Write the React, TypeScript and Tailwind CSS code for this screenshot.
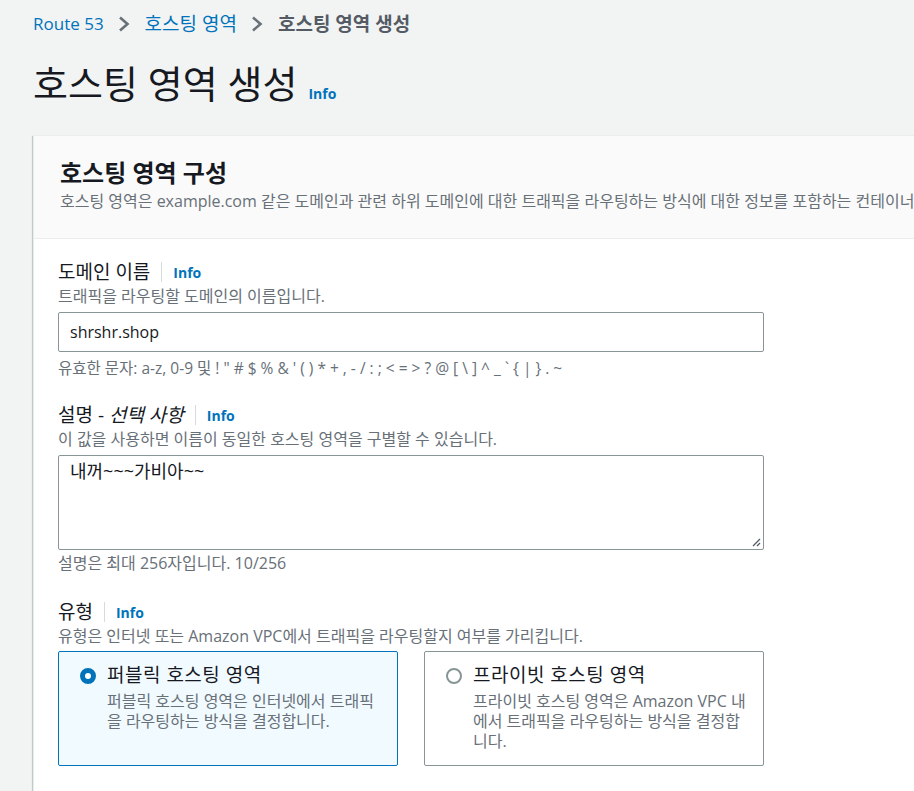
const font = "font-['Open_Sans','Noto_Sans_CJK_KR',sans-serif]";

function Chevron() {
  return (
    <svg className="ml-[14px] mr-[15px]" width="12" height="16" viewBox="0 0 12 16" fill="none">
      <path d="M2 1.5 L9.5 8 L2 14.5" stroke="#687078" strokeWidth="2.6" />
    </svg>
  );
}

function Info() {
  return <span className="text-[14px] font-bold text-[#0073bb]">Info</span>;
}

function Label({ children }: { children: React.ReactNode }) {
  return (
    <div className="flex items-center">
      <span className="text-[19px] leading-[24px] text-[#16191f]">{children}</span>
      <span className="mx-[11px] h-[20px] w-px bg-[#d5dbdb]" />
      <Info />
    </div>
  );
}

function Hint({ children, className = '' }: { children: React.ReactNode; className?: string }) {
  return <p className={`text-[16px] leading-[20px] text-[#687078] ${className}`}>{children}</p>;
}

function RadioCard({ checked, title, lines }: { checked: boolean; title: string; lines: string[] }) {
  return (
    <div
      className={`flex gap-[11px] rounded-[2px] border pl-[21px] pr-[18px] pt-[11px] pb-[14px] ${
        checked ? 'border-[#0073bb] bg-[#f1faff]' : 'border-[#879596] bg-white'
      }`}
    >
      <div className="pt-[5px]">
        {checked ? (
          <span className="block h-[16px] w-[16px] rounded-full border-[5px] border-[#0073bb] bg-white" />
        ) : (
          <span className="block h-[16px] w-[16px] rounded-full border-[2px] border-[#879596] bg-white" />
        )}
      </div>
      <div>
        <div className="text-[19px] leading-[24px] tracking-[0.5px] text-[#16191f]">{title}</div>
        <div className="mt-[4px]">
          {lines.map((l) => (
            <Hint key={l} className="whitespace-nowrap">{l}</Hint>
          ))}
        </div>
      </div>
    </div>
  );
}

export default function App() {
  return (
    <div className={`min-h-screen overflow-hidden bg-[#f2f3f3] ${font}`}>
      <div className="pl-[33px] pt-[12px]">
        {/* breadcrumb */}
        <nav className="flex items-center leading-[24px]">
          <span className="text-[17px] text-[#0073bb]">Route 53</span>
          <Chevron />
          <span className="text-[19px] text-[#0073bb]">호스팅 영역</span>
          <Chevron />
          <span className="text-[19px] font-bold text-[#545b64]">호스팅 영역 생성</span>
        </nav>

        <div className="mt-[24px] flex items-end gap-[11px]">
          <h1 className="text-[38px] leading-[46px] text-[#16191f]">호스팅 영역 생성</h1>
          <span className="mb-[1px]"><Info /></span>
        </div>

        {/* card */}
        <div className="mt-[29px] w-[1100px] border-l border-t border-[#eaeded] bg-white shadow-[0_1px_1px_0_rgba(0,28,36,0.3),1px_1px_1px_0_rgba(0,28,36,0.15),-1px_1px_1px_0_rgba(0,28,36,0.15)]">
          <div className="border-b border-[#eaeded] bg-[#fafafa] px-[26px] pt-[21px] pb-[27px]">
            <h2 className="text-[24px] font-bold leading-[32px] text-[#16191f]">호스팅 영역 구성</h2>
            <Hint className="mt-[2px] whitespace-nowrap text-[#545b64]">
              호스팅 영역은 example.com 같은 도메인과 관련 하위 도메인에 대한 트래픽을 라우팅하는 방식에 대한 정보를 포함하는 컨테이너입니다.
            </Hint>
          </div>

          <div className="w-[730px] pl-[24px] pt-[21px] pb-[60px]">
            <Label>도메인 이름</Label>
            <Hint className="mt-[2px]">트래픽을 라우팅할 도메인의 이름입니다.</Hint>
            <div className="mt-[6px] flex h-[40px] items-center rounded-[2px] border border-[#879596] bg-white px-[11px] text-[16px] text-[#16191f]">
              shrshr.shop
            </div>
            <p className="mt-[6px] text-[15.5px] leading-[20px] text-[#687078]">
              유효한 문자: a-z, 0-9 및 ! &quot; # $ % &amp; &#39; ( ) * + , - / : ; &lt; = &gt; ? @ [ \ ] ^ _ ` {'{'} | {'}'} . ~
            </p>

            <div className="mt-[25px]">
              <Label>
                설명 - <i>선택 사항</i>
              </Label>
            </div>
            <Hint className="mt-[2px]">이 값을 사용하면 이름이 동일한 호스팅 영역을 구별할 수 있습니다.</Hint>
            <div className="relative mt-[6px] h-[95px] rounded-[2px] border border-[#879596] bg-white px-[11px] pt-[3px] text-[18px] leading-[24px] text-[#16191f]">
              <span>내꺼~~~가비아~~</span>
              <svg className="absolute bottom-[2px] right-[2px]" width="10" height="10" viewBox="0 0 10 10">
                <path d="M9 2 L2 9 M9 6 L6 9" stroke="#545b64" strokeWidth="1.3" />
              </svg>
            </div>
            <Hint className="mt-[3px]">설명은 최대 256자입니다. 10/256</Hint>

            <div className="mt-[27px]">
              <Label>유형</Label>
            </div>
            <Hint className="mt-[2px]">유형은 인터넷 또는 Amazon VPC에서 트래픽을 라우팅할지 여부를 가리킵니다.</Hint>
            <div className="mt-[5px] grid grid-cols-2 gap-[26px]">
              <RadioCard
                checked
                title="퍼블릭 호스팅 영역"
                lines={['퍼블릭 호스팅 영역은 인터넷에서 트래픽', '을 라우팅하는 방식을 결정합니다.']}
              />
              <RadioCard
                checked={false}
                title="프라이빗 호스팅 영역"
                lines={['프라이빗 호스팅 영역은 Amazon VPC 내', '에서 트래픽을 라우팅하는 방식을 결정합', '니다.']}
              />
            </div>
          </div>
        </div>
      </div>
    </div>
  );
}
